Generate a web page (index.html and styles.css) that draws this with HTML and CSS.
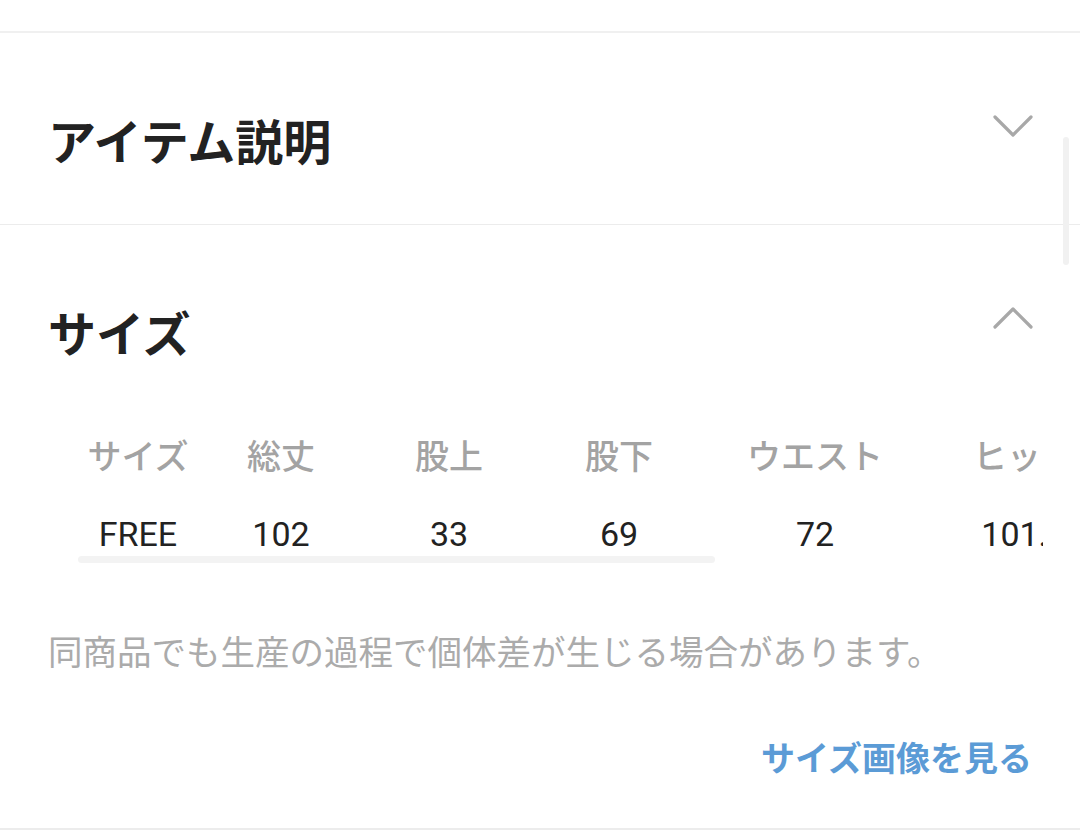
FILE: index.html
```html
<!DOCTYPE html>
<html lang="ja">
<head>
<meta charset="utf-8">
<link rel="stylesheet" href="styles.css">
</head>
<body>
<div class="page">
  <div class="top-space"></div>
  <section class="section">
    <div class="section-head">
      <h2 class="section-title">アイテム説明</h2>
      <svg class="chevron" width="42" height="26" viewBox="0 0 42 26"><polyline points="3,4 21,22 39,4" fill="none" stroke="#a8a8a8" stroke-width="3.2" stroke-linecap="round" stroke-linejoin="round"/></svg>
    </div>
  </section>
  <section class="section section-open">
    <div class="section-head">
      <h2 class="section-title">サイズ</h2>
      <svg class="chevron" width="42" height="26" viewBox="0 0 42 26"><polyline points="3,22 21,4 39,22" fill="none" stroke="#a8a8a8" stroke-width="3.2" stroke-linecap="round" stroke-linejoin="round"/></svg>
    </div>
    <div class="size-table-wrap">
      <div class="size-table">
        <div class="th">サイズ</div>
        <div class="th">総丈</div>
        <div class="th">股上</div>
        <div class="th">股下</div>
        <div class="th">ウエスト</div>
        <div class="th">ヒップ</div>
        <div class="td">FREE</div>
        <div class="td">102</div>
        <div class="td">33</div>
        <div class="td">69</div>
        <div class="td">72</div>
        <div class="td">101.5</div>
      </div>
      <div class="hscroll-thumb"></div>
    </div>
    <p class="note">同商品でも生産の過程で個体差が生じる場合があります。</p>
    <div class="link-row"><a class="size-link">サイズ画像を見る</a></div>
  </section>
  <div class="vscroll-thumb"></div>
</div>
</body>
</html>
```

FILE: styles.css
```css
html, body {
  margin: 0;
  padding: 0;
  background: #ffffff;
}
body {
  font-family: "Noto Sans CJK JP", "Noto Sans", sans-serif;
  color: #222222;
  width: 1080px;
  height: 831px;
  overflow: hidden;
}
.page {
  position: relative;
  width: 1080px;
}
.top-space {
  height: 31px;
}
.section {
  border-top: 2px solid #f0f0f0;
  padding: 0 48px;
}
.section + .section {
  border-top: 1px solid #ececec;
}
.section-head {
  display: flex;
  align-items: center;
  justify-content: space-between;
  padding-top: 74px;
  padding-bottom: 53px;
}
.section-open .section-head {
  padding-bottom: 0;
}
.section-title {
  margin: 0;
  font-size: 48px;
  line-height: 64px;
  font-weight: 700;
  color: #222222;
  letter-spacing: 0;
}
.chevron {
  display: block;
  margin-bottom: 26px;
  margin-right: -2px;
}
.size-table-wrap {
  margin-top: 67px;
  margin-left: 30px;
  width: 965px;
  overflow: hidden;
}
.size-table {
  display: grid;
  grid-template-columns: 120px 166px 170px 170px 222px 196px;
  grid-template-rows: 50px 44px;
  row-gap: 32px;
  width: 1044px;
}
.th {
  text-align: center;
  font-size: 34px;
  line-height: 50px;
  font-weight: 500;
  color: #a3a3a3;
  white-space: nowrap;
}
.td {
  text-align: center;
  font-family: Roboto, "Liberation Sans", sans-serif;
  font-size: 34px;
  line-height: 44px;
  color: #222222;
  white-space: nowrap;
}
.hscroll-thumb {
  width: 637px;
  height: 7px;
  border-radius: 4px;
  background: #f3f3f3;
}
.note {
  margin: 63px 0 0 0;
  font-size: 34.5px;
  line-height: 48px;
  font-weight: 400;
  color: #ababab;
  white-space: nowrap;
}
.link-row {
  display: flex;
  justify-content: flex-end;
  margin-top: 59px;
  padding-bottom: 47px;
  border-bottom: 2px solid #ececec;
  margin-left: -48px;
  margin-right: -48px;
  padding-right: 48px;
}
.size-link {
  font-size: 34px;
  line-height: 48px;
  font-weight: 700;
  color: #5b9bd6;
  text-decoration: none;
}
.vscroll-thumb {
  position: absolute;
  left: 1063px;
  top: 137px;
  width: 6px;
  height: 128px;
  border-radius: 3px;
  background: #f1f1f1;
}
```
